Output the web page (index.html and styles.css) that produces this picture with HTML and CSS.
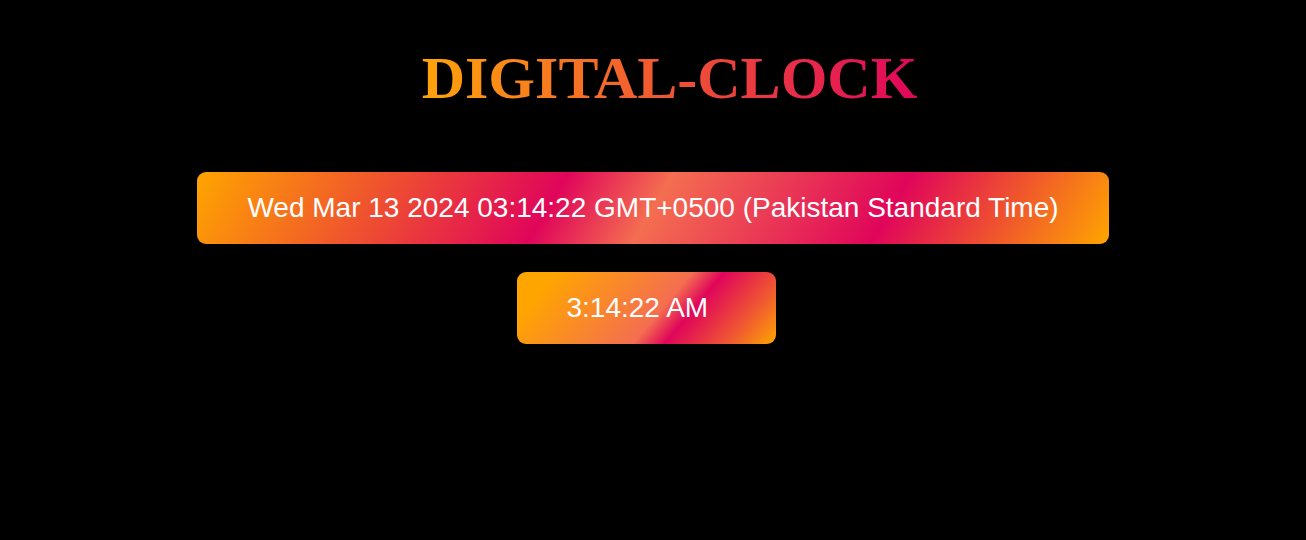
FILE: index.html
```html
<!DOCTYPE html>
<html lang="en">
<head>
<meta charset="utf-8">
<title>Digital Clock</title>
<link rel="stylesheet" href="styles.css">
</head>
<body>
<main class="clock">
  <h1 class="clock-title">DIGITAL-CLOCK</h1>
  <div class="clock-date">Wed Mar 13 2024 03:14:22 GMT+0500 (Pakistan Standard Time)</div>
  <div class="clock-time">3:14:22 AM</div>
</main>
</body>
</html>
```

FILE: styles.css
```css
html, body {
  margin: 0;
  padding: 0;
  background: #000;
}

body {
  width: 1306px;
  height: 540px;
  overflow: hidden;
  font-family: "Liberation Sans", Arial, sans-serif;
}

.clock {
  display: flex;
  flex-direction: column;
  align-items: center;
  padding-top: 44px;
}

.clock-title {
  margin: 0 0 59px 33px;
  font-family: "Liberation Serif", "Times New Roman", serif;
  font-weight: 700;
  font-size: 60px;
  line-height: normal;
  background: linear-gradient(to right, #ffa40a, #e0065c);
  -webkit-background-clip: text;
  background-clip: text;
  color: transparent;
}

.clock-date,
.clock-time {
  color: #fff;
  font-size: 28px;
  line-height: 32px;
  border-radius: 9px;
  box-sizing: border-box;
  height: 72px;
  padding: 20px 50px;
  white-space: nowrap;
}

.clock-date {
  background: linear-gradient(120deg, #ffa500 0%, #e0055a 39%, #f46e50 50%, #e0055a 75%, #ffa500 100%);
  margin-bottom: 28px;
}

.clock-time {
  width: 259px;
  margin-right: 14px;
  text-align: left;
  background: linear-gradient(130deg, #ffa500 12%, #f46e50 55%, #e0055a 65%, #f05a30 85%, #ffa500 100%);
}
```
